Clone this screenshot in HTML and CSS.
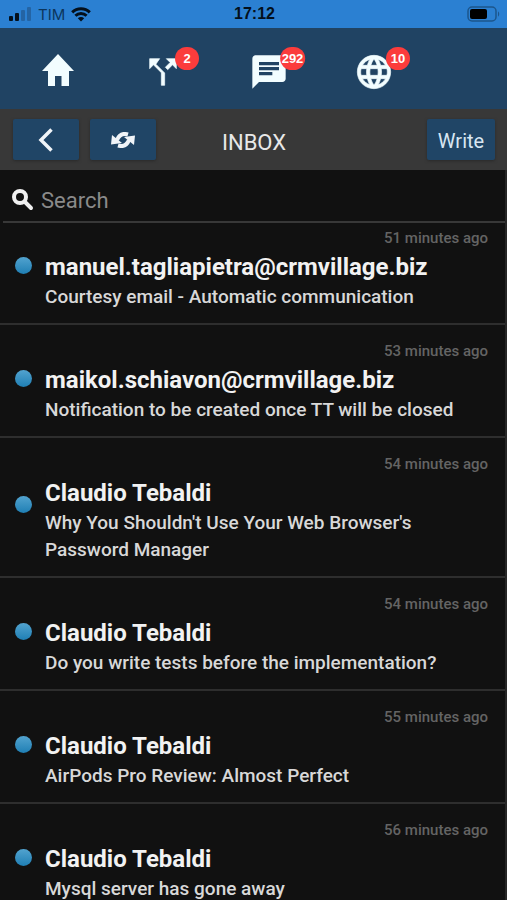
FILE: index.html
```html
<!DOCTYPE html>
<html lang="en">
<head>
<meta charset="utf-8">
<meta name="viewport" content="width=device-width, initial-scale=1">
<title>Inbox</title>
<link rel="stylesheet" href="styles.css">
</head>
<body>
<div class="status">
  <div class="carrier">
    <svg class="signal" viewBox="0 0 23 14" aria-hidden="true"><rect x="0" y="9" width="4" height="5" rx="1"/><rect x="6" y="6" width="4" height="8" rx="1"/><rect class="off" x="12" y="3" width="4" height="11" rx="1"/><rect class="off" x="18" y="0" width="4" height="14" rx="1"/></svg>
    <span>TIM</span>
    <svg class="wifi" viewBox="0 0 20 15" aria-hidden="true"><path d="M1.2 5.4a12.6 12.6 0 0 1 17.6 0M4.4 8.7a8 8 0 0 1 11.2 0"/><path class="tip" d="M6.8 11.3a4.6 4.6 0 0 1 6.4 0L10 14.6z"/></svg>
  </div>
  <time class="clock">17:12</time>
  <svg class="battery" viewBox="0 0 33 16" aria-hidden="true"><rect class="shell" x="1" y="1" width="28" height="14" rx="4"/><rect x="3" y="3" width="17" height="10" rx="2"/><path class="cap" d="M31 5.5c1.6.6 1.6 4.4 0 5z"/></svg>
</div>
<nav class="tabs" aria-label="Main">
  <a class="tab" href="#home" aria-label="Home"><svg class="home" viewBox="0 0 32 32"><path d="M16 0 32 17H27V32H19.5V22H13V32H6V17H0z"/></svg></a>
  <a class="tab" href="#routes" aria-label="Routes"><svg class="split" viewBox="0 0 24 24"><path d="M14 4l2.29 2.29-2.88 2.88 1.42 1.42 2.88-2.88L20 10V4zm-4 0H4v6l2.29-2.29 4.71 4.7V20h2v-7.41l-5.29-5.3z"/></svg><span class="badge">2</span></a>
  <a class="tab" href="#messages" aria-label="Messages"><svg viewBox="0 0 24 24"><path d="M20 2H4c-1.1 0-1.99.9-1.99 2L2 22l4-4h14c1.1 0 2-.9 2-2V4c0-1.1-.9-2-2-2zM6 9h12v2H6V9zm8 5H6v-2h8v2zm4-6H6V6h12v2z"/></svg><span class="badge">292</span></a>
  <a class="tab" href="#web" aria-label="Web"><svg viewBox="0 0 24 24"><path d="M11.99 2C6.47 2 2 6.48 2 12s4.47 10 9.99 10C17.52 22 22 17.52 22 12S17.52 2 11.99 2zm6.93 6h-2.95c-.32-1.25-.78-2.45-1.38-3.56 1.84.63 3.37 1.91 4.33 3.56zM12 4.04c.83 1.2 1.48 2.53 1.91 3.96h-3.82c.43-1.43 1.08-2.76 1.91-3.96zM4.26 14C4.1 13.36 4 12.69 4 12s.1-1.36.26-2h3.38c-.08.66-.14 1.32-.14 2 0 .68.06 1.34.14 2H4.26zm.82 2h2.95c.32 1.25.78 2.45 1.38 3.56-1.84-.63-3.37-1.9-4.33-3.56zm2.95-8H5.08c.96-1.66 2.49-2.93 4.33-3.56C8.81 5.55 8.35 6.75 8.03 8zM12 19.96c-.83-1.2-1.48-2.53-1.91-3.96h3.82c-.43 1.43-1.08 2.76-1.91 3.96zM14.34 14H9.66c-.09-.66-.16-1.32-.16-2 0-.68.07-1.35.16-2h4.68c.09.65.16 1.32.16 2 0 .68-.07 1.34-.16 2zm.25 5.56c.6-1.11 1.06-2.31 1.38-3.56h2.95c-.96 1.65-2.49 2.93-4.33 3.56zM16.36 14c.08-.66.14-1.32.14-2 0-.68-.06-1.34-.14-2h3.38c.16.64.26 1.31.26 2s-.1 1.36-.26 2h-3.38z" class="bold"/></svg><span class="badge">10</span></a>
</nav>
<header class="toolbar">
  <div class="actions">
    <button class="btn" type="button" aria-label="Back"><svg class="back" viewBox="0 0 16 24"><path d="M13.5 1.5 3 12 13.5 22.5"/></svg></button>
    <button class="btn" type="button" aria-label="Refresh"><svg class="refresh" viewBox="0 0 24 16"><path class="arc" d="M17 2.500C12 1 8 3 6 8M7 13.500C12 15 16 13 18 8"/><path d="M1 3 0 12.500 11 11zM23 13 24 3.500 13 5z"/></svg></button>
  </div>
  <h1 class="title">INBOX</h1>
  <button class="btn write" type="button">Write</button>
</header>
<main class="inbox">
  <label class="search">
    <svg viewBox="0 0 22 22" aria-hidden="true"><circle cx="8" cy="8" r="6"/><path d="M12.5 12.5 19 19"/></svg>
    <input type="search" placeholder="Search" aria-label="Search">
  </label>
  <ul class="list">
    <li class="mail"><span class="dot"></span><div class="text"><time class="when">51 minutes ago</time><h2 class="from">manuel.tagliapietra@crmvillage.biz</h2><p class="subject">Courtesy email - Automatic communication</p></div></li>
    <li class="mail"><span class="dot"></span><div class="text"><time class="when">53 minutes ago</time><h2 class="from">maikol.schiavon@crmvillage.biz</h2><p class="subject">Notification to be created once TT will be closed</p></div></li>
    <li class="mail"><span class="dot"></span><div class="text"><time class="when">54 minutes ago</time><h2 class="from">Claudio Tebaldi</h2><p class="subject">Why You Shouldn't Use Your Web Browser's Password Manager</p></div></li>
    <li class="mail"><span class="dot"></span><div class="text"><time class="when">54 minutes ago</time><h2 class="from">Claudio Tebaldi</h2><p class="subject">Do you write tests before the implementation?</p></div></li>
    <li class="mail"><span class="dot"></span><div class="text"><time class="when">55 minutes ago</time><h2 class="from">Claudio Tebaldi</h2><p class="subject">AirPods Pro Review: Almost Perfect</p></div></li>
    <li class="mail"><span class="dot"></span><div class="text"><time class="when">56 minutes ago</time><h2 class="from">Claudio Tebaldi</h2><p class="subject">Mysql server has gone away</p></div></li>
  </ul>
</main>
</body>
</html>
```
FILE: styles.css
```css
* { box-sizing: border-box; margin: 0; padding: 0; }

body {
  display: flex;
  flex-direction: column;
  height: 100vh;
  overflow: hidden;
  background: #111;
  color: #e8e8e8;
  font-family: Roboto, "Liberation Sans", sans-serif;
}

svg { display: block; fill: currentColor; }

.status {
  flex: none;
  display: grid;
  grid-template-columns: 1fr auto 1fr;
  align-items: center;
  height: 28px;
  padding: 0 7px 0 9px;
  background: #2b80d2;
  color: #04101c;
  font-family: Inter, "Liberation Sans", sans-serif;
  font-size: 15px;
}
.carrier { display: flex; align-items: center; gap: 6px; color: #0c355c; }
.signal { width: 23px; height: 14px; color: #04101c; }
.signal .off { fill: #2464a4; }
.wifi { width: 20px; height: 15px; color: #04101c; }
.wifi path { fill: none; stroke: currentColor; stroke-width: 3; }
.wifi .tip { fill: currentColor; stroke: none; }
.clock { font: bold 16px/20px "Liberation Sans", sans-serif; }
.battery { justify-self: end; width: 33px; height: 16px; color: #000; }
.battery .shell { fill: none; stroke: #1c558c; stroke-width: 1.5; }
.battery .cap { fill: #1c558c; }

.tabs {
  flex: none;
  display: grid;
  grid-template-columns: repeat(4, 21%);
  height: 81px;
  padding-left: 5px;
  background: #204363;
}
.tab {
  position: relative;
  display: flex;
  align-items: center;
  justify-content: center;
  padding-top: 7px;
  color: #f2fdff;
  text-decoration: none;
}
.tab svg { width: 40px; height: 40px; }
.tab .home { width: 32px; height: 32px; margin-bottom: 4px; }
.split path, .bold { stroke: currentColor; stroke-width: 0.4; }
.badge {
  position: absolute;
  top: 19px;
  left: calc(50% + 24px);
  transform: translateX(-50%);
  min-width: 24px;
  padding: 0 2px;
  border-radius: 12px;
  background: #fb3c3c;
  color: #fff;
  font: bold 13px/23px "Liberation Sans", sans-serif;
  text-align: center;
}

.toolbar {
  flex: none;
  display: grid;
  grid-template-columns: 1fr auto 1fr;
  align-items: center;
  height: 61px;
  padding: 0 12px 0 13px;
  background: #383838;
}
.actions { display: flex; gap: 11px; }
.btn {
  display: flex;
  align-items: center;
  justify-content: center;
  width: 66px;
  height: 41px;
  border: 0;
  border-radius: 2px;
  background: #204566;
  box-shadow: 0 1px 3px #2a2a2a;
  color: #f0f4f8;
  font: 20px/24px Roboto, sans-serif;
}
.write { justify-self: end; width: 68px; padding-top: 2px; color: #d8e6f2; }
.back { width: 16px; height: 24px; fill: none; stroke: currentColor; stroke-width: 3.5; }
.refresh { width: 24px; height: 16px; }
.refresh .arc { fill: none; stroke: currentColor; stroke-width: 4; }
.title { padding-top: 7px; font-size: 22px; font-weight: 400; line-height: 26px; }

.inbox {
  flex: 1;
  min-height: 0;
  overflow: hidden;
  border-right: 2px solid #262626;
}
.search {
  display: flex;
  align-items: center;
  gap: 7px;
  height: 53px;
  margin-left: 3px;
  padding: 10px 9px 0;
  border-bottom: 2px solid #383838;
}
.search svg { width: 22px; height: 22px; margin-bottom: 2px; stroke: #f0f0f0; stroke-width: 4; fill: none; }
.search path { stroke-linecap: round; }
.search input {
  flex: 1;
  min-width: 0;
  border: 0;
  outline: 0;
  background: none;
  color: #e8e8e8;
  font: 22px/28px Roboto, sans-serif;
}
.search input::placeholder { color: #8a8a8a; opacity: 1; }

.list { margin-top: -11px; list-style: none; }
.mail {
  display: flex;
  align-items: center;
  gap: 13px;
  padding: 0 17px 0 15px;
  border-bottom: 2px solid #2e2e2e;
}
.dot {
  flex: none;
  width: 17px;
  height: 17px;
  margin-bottom: 5px;
  border-radius: 50%;
  background: linear-gradient(#52a3cf, #1f7fb4);
}
.text { flex: 1; min-width: 0; padding: 16px 0 13px; }
.when {
  display: block;
  color: #646464;
  font-size: 15px;
  font-weight: 500;
  line-height: 20px;
  text-align: right;
}
.from { padding-top: 4px; color: #f2f2f2; font-size: 24px; font-weight: 700; line-height: 31px; }
.subject { max-width: 420px; color: #d8d8d8; font-size: 19px; font-weight: 500; line-height: 27px; }
```
